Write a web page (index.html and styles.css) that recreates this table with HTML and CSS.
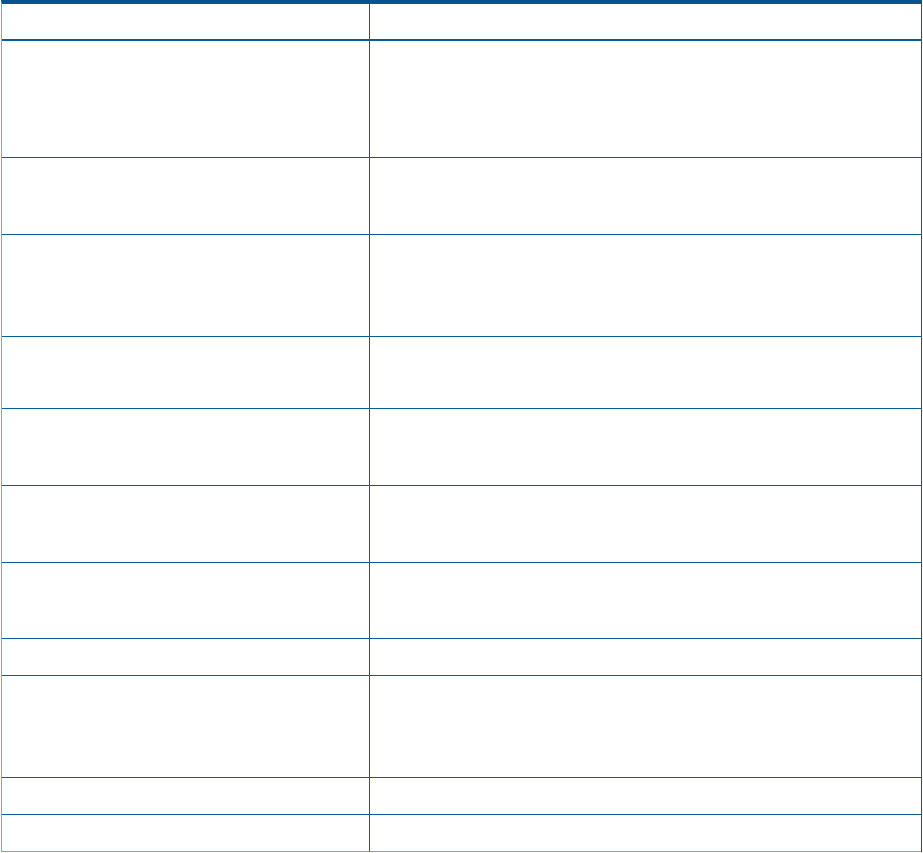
FILE: index.html
```html
<!DOCTYPE html>
<html lang="en">
<head>
    <meta charset="UTF-8">
    <meta name="viewport" content="width=device-width, initial-scale=1.0">
    <title>Table</title>
    <link rel="stylesheet" href="styles.css">
</head>
<body>
    <div class="table">
        <div class="cell head first"></div>
        <div class="cell head"></div>

        <div class="cell r117 first"></div>
        <div class="cell r117"></div>

        <div class="cell r77 first"></div>
        <div class="cell r77"></div>

        <div class="cell r102 first"></div>
        <div class="cell r102"></div>

        <div class="cell r72 first"></div>
        <div class="cell r72"></div>

        <div class="cell r77 first"></div>
        <div class="cell r77"></div>

        <div class="cell r77 first"></div>
        <div class="cell r77"></div>

        <div class="cell r76 first"></div>
        <div class="cell r76"></div>

        <div class="cell r37 first"></div>
        <div class="cell r37"></div>

        <div class="cell r102 first"></div>
        <div class="cell r102"></div>

        <div class="cell r37 first"></div>
        <div class="cell r37"></div>

        <div class="cell r37 first last"></div>
        <div class="cell r37 last"></div>
    </div>
</body>
</html>
```

FILE: styles.css
```css
body {
    margin: 0;
    background-color: #fff;
    font-family: 'Liberation Sans', Arial, sans-serif;
}
.table {
    display: grid;
    grid-template-columns: 368px 551px;
    margin-left: 1px;
    width: 921px;
    box-sizing: border-box;
    border-top: 4px solid #08528f;
    border-left: 1px solid #7aa6cf;
    border-right: 1px solid #0b5aa0;
}
.cell {
    box-sizing: border-box;
    border-bottom: 1px solid #0b5aa0;
}
.cell.first {
    border-right: 1px solid #0b5aa0;
}
.cell.head {
    height: 37px;
    border-bottom: 2px solid #0b5aa0;
}
.cell.last {
    border-bottom-color: #7aa6cf;
}
.r117 { height: 117px; }
.r102 { height: 102px; }
.r77 { height: 77px; }
.r76 { height: 76px; }
.r72 { height: 72px; }
.r37 { height: 37px; }
```
